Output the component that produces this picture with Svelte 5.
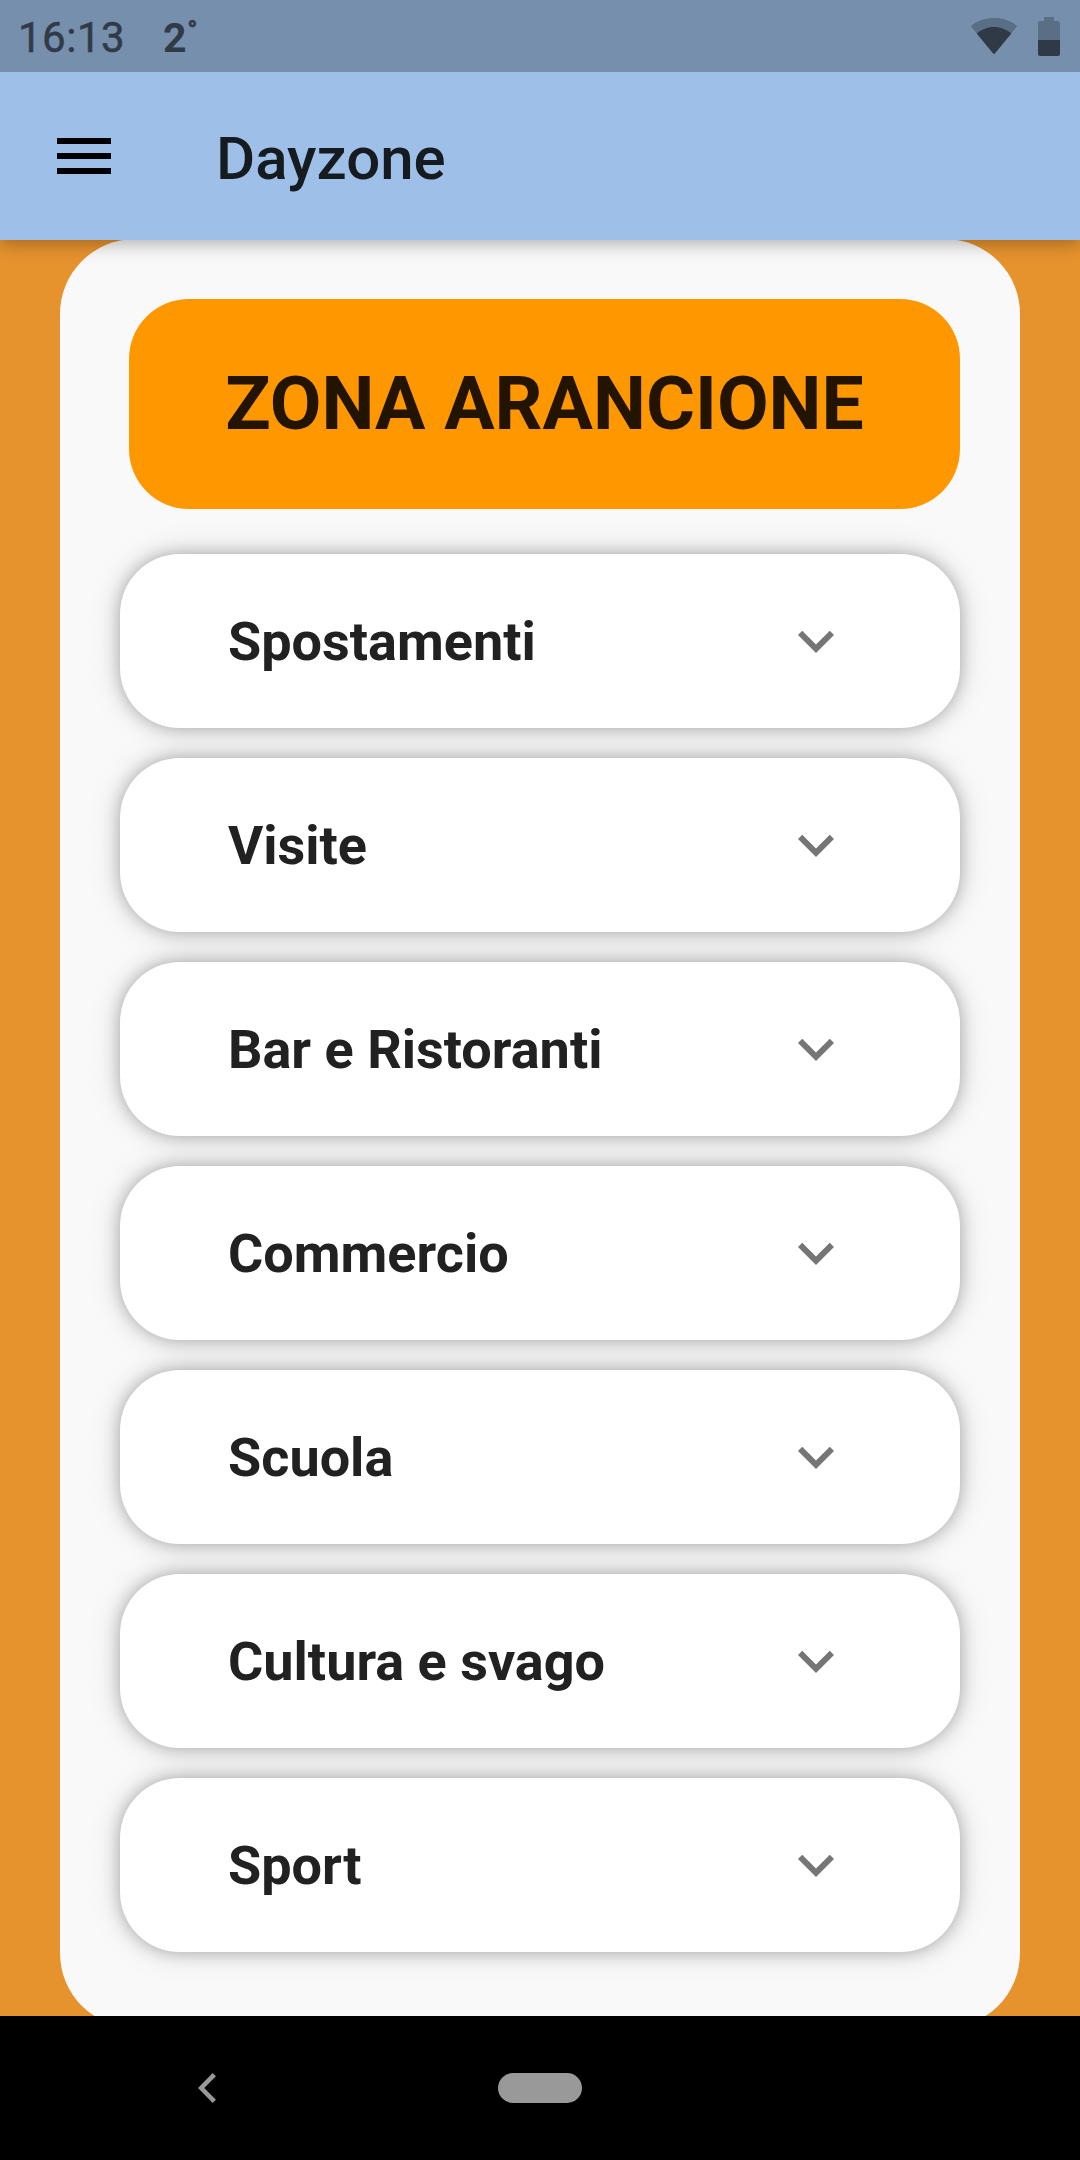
<script>
  let time = "16:13";
  let zone = "Zona arancione";
  let open = null;

  const sections = [
    "Spostamenti",
    "Visite",
    "Bar e Ristoranti",
    "Commercio",
    "Scuola",
    "Cultura e svago",
    "Sport"
  ];

  function toggle(name) {
    open = open === name ? null : name;
  }
</script>

<div class="screen">
  <div class="status-bar">
    <span class="time">{time}</span>
    <span class="temp">2<span class="degree">°</span></span>
    <div class="status-icons">
      <svg class="wifi" width="46" height="36" viewBox="0 0 46 36">
        <path class="faint" d="M23 0C14.500 0 6.500 2.700.600 7.300q-.700.800 0 1.700L22 35.200q1 1 2 0L45.400 9q.700-.900 0-1.700C39.500 2.700 31.500 0 23 0z" />
        <path class="solid" d="M23 9C16.500 9 10.600 11.500 5.700 15.500L22 35.200q1 1 2 0L40.300 15.500C35.400 11.500 29.500 9 23 9z" />
      </svg>
      <svg class="battery" width="22" height="39" viewBox="0 0 22 39">
        <path class="faint" d="M6 0h10v4h4q2 0 2 2v17H0V6q0-2 2-2h4z" />
        <path class="solid" d="M0 23h22v14q0 2-2 2H2q-2 0-2-2z" />
      </svg>
    </div>
  </div>

  <header class="app-bar">
    <button class="menu" aria-label="Menu">
      <svg width="72" height="72" viewBox="0 0 24 24">
        <path d="M3 18h18v-2H3v2zm0-5h18v-2H3v2zm0-7v2h18V6H3z" />
      </svg>
    </button>
    <h1>Dayzone</h1>
  </header>

  <main>
    <div class="panel">
      <div class="banner">{zone.toUpperCase()}</div>
      <div class="cards">
        {#each sections as name}
          <button class="card" on:click={() => toggle(name)}>
            <span>{name}</span>
            <svg class:flipped={open === name} width="72" height="72" viewBox="0 0 24 24">
              <path d="M16.590 8.590L12 13.170 7.410 8.590 6 10l6 6 6-6z" />
            </svg>
          </button>
        {/each}
      </div>
    </div>
  </main>

  <nav>
    <svg class="back" width="18" height="30" viewBox="0 0 18 30">
      <path d="M16.300 1.600L3.200 15l13.100 13.400" />
    </svg>
    <div class="home"></div>
  </nav>
</div>

<style>
  :global(body) {
    margin: 0;
  }

  .screen {
    display: flex;
    flex-direction: column;
    width: 1080px;
    height: 2160px;
    overflow: hidden;
    background-color: #e6932d;
    font-family: Roboto, "Liberation Sans", sans-serif;
  }

  button {
    border: none;
    padding: 0;
    font: inherit;
    background: none;
  }

  svg {
    display: block;
  }

  .status-bar {
    position: relative;
    z-index: 2;
    display: flex;
    align-items: center;
    flex: none;
    height: 72px;
    box-sizing: border-box;
    padding: 2px 20px 0 18px;
    background-color: #758fad;
    color: #303b47;
    font-size: 42px;
    line-height: 1;
  }
  .time {
    width: 145px;
    padding-top: 2px;
    letter-spacing: 0.5px;
    -webkit-text-stroke: 0.5px #303b47;
  }
  .temp {
    display: flex;
    padding-top: 2px;
    font-size: 41px;
    font-weight: 700;
  }
  .degree {
    margin-left: 1px;
    font-size: 25px;
    -webkit-text-stroke: 0.8px #303b47;
  }
  .status-icons {
    display: flex;
    align-items: flex-start;
    gap: 21px;
    height: 40px;
    margin-left: auto;
  }
  .wifi {
    margin-top: 1px;
  }
  .faint {
    fill: #5a6e86;
  }
  .solid {
    fill: #303a46;
  }

  .app-bar {
    position: relative;
    z-index: 1;
    display: flex;
    align-items: center;
    flex: none;
    height: 168px;
    box-sizing: border-box;
    padding-left: 48px;
    gap: 96px;
    background-color: #9dbfe8;
    box-shadow: 0 3px 18px rgba(0, 0, 0, 0.32);
  }
  h1 {
    margin: 6px 0 0;
    color: #161b20;
    font-size: 60px;
    font-weight: 500;
    line-height: 1;
  }

  main {
    flex: 1;
    min-height: 0;
    overflow: hidden;
    padding: 0 60px;
  }
  .panel {
    height: 1789px;
    box-sizing: border-box;
    margin-top: -1px;
    padding: 60px;
    border-radius: 75px;
    background-color: #f9f9f9;
  }
  .banner {
    display: flex;
    align-items: center;
    justify-content: center;
    height: 210px;
    box-sizing: border-box;
    margin-left: 9px;
    padding-bottom: 2px;
    border-radius: 60px;
    background-color: #ff9800;
    color: #221400;
    font-size: 75px;
    font-weight: 700;
  }
  .cards {
    display: flex;
    flex-direction: column;
    gap: 30px;
    margin-top: 45px;
  }
  .card {
    display: flex;
    align-items: center;
    justify-content: space-between;
    height: 174px;
    padding: 0 108px;
    border-radius: 60px;
    background-color: #fff;
    color: #212121;
    font-size: 54px;
    font-weight: 700;
    box-shadow: 0 0 17px rgba(0, 0, 0, 0.29), 0 0 36px rgba(0, 0, 0, 0.11);
  }
  .card svg {
    fill: #757575;
  }
  .flipped {
    transform: rotate(180deg);
  }

  nav {
    display: grid;
    grid-template-columns: 198px 300px 84px;
    align-items: center;
    flex: none;
    height: 144px;
    background-color: #000;
  }
  .back {
    grid-column: 2;
    fill: none;
    stroke: #999;
    stroke-width: 4.5;
  }
  .home {
    height: 30px;
    border-radius: 15px;
    background-color: #999;
  }
</style>
